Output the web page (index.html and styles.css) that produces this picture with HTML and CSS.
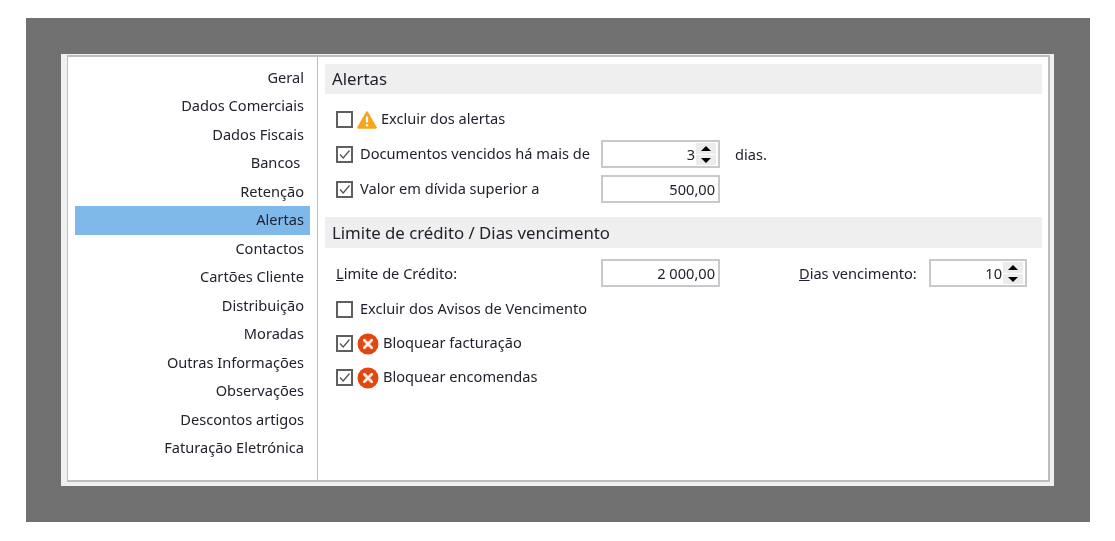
FILE: index.html
```html
<!DOCTYPE html>
<html lang="pt">
<head>
<meta charset="utf-8">
<title>Alertas</title>
<link rel="stylesheet" href="styles.css">
</head>
<body>
<div class="backdrop">
  <div class="frame">
    <div class="window">
      <nav class="sidebar">
        <div class="nav-item">Geral</div>
        <div class="nav-item">Dados Comerciais</div>
        <div class="nav-item">Dados Fiscais</div>
        <div class="nav-item">Bancos&nbsp;</div>
        <div class="nav-item">Retenção</div>
        <div class="nav-item active">Alertas</div>
        <div class="nav-item">Contactos</div>
        <div class="nav-item">Cartões Cliente</div>
        <div class="nav-item">Distribuição</div>
        <div class="nav-item">Moradas</div>
        <div class="nav-item">Outras Informações</div>
        <div class="nav-item">Observações</div>
        <div class="nav-item">Descontos artigos</div>
        <div class="nav-item">Faturação Eletrónica</div>
      </nav>
      <main class="content">
        <h2 class="section">Alertas</h2>
        <div class="row row-check first">
          <span class="check"></span>
          <svg class="icon-warn" viewBox="0 0 20 18" width="20" height="18"><path d="M10 1.5 18.6 16.5H1.4Z" fill="#f8a51c" stroke="#f8a51c" stroke-width="2.4" stroke-linejoin="round"/><path d="M10 5.5v6" stroke="#fff" stroke-width="2.2"/><circle cx="10" cy="14.3" r="1.3" fill="#fff"/></svg>
          <span class="label label-warn">Excluir dos alertas</span>
        </div>
        <div class="row row-input gap-12">
          <span class="check checked"><svg viewBox="0 0 13 13" width="13" height="13"><path d="M2 6.5 5.2 10 11.5 2.5" fill="none" stroke="#555" stroke-width="1.3"/></svg></span>
          <span class="label label-plain">Documentos vencidos há mais de</span>
          <span class="field field-a spin-field">
            <span class="value">3</span>
            <span class="spin"><span class="up"></span><span class="down"></span></span>
          </span>
          <span class="label unit">dias.</span>
        </div>
        <div class="row row-input gap-7">
          <span class="check checked"><svg viewBox="0 0 13 13" width="13" height="13"><path d="M2 6.5 5.2 10 11.5 2.5" fill="none" stroke="#555" stroke-width="1.3"/></svg></span>
          <span class="label label-plain">Valor em dívida superior a</span>
          <span class="field field-a"><span class="value">500,00</span></span>
        </div>
        <h2 class="section section-2">Limite de crédito / Dias vencimento</h2>
        <div class="row row-input gap-11">
          <span class="label label-limit"><u>L</u>imite de Crédito:</span>
          <span class="field field-a"><span class="value">2 000,00</span></span>
          <span class="label label-dias"><u>D</u>ias vencimento:</span>
          <span class="field field-b spin-field">
            <span class="value">10</span>
            <span class="spin"><span class="up"></span><span class="down"></span></span>
          </span>
        </div>
        <div class="row row-check gap-14">
          <span class="check"></span>
          <span class="label label-plain">Excluir dos Avisos de Vencimento</span>
        </div>
        <div class="row row-check gap-17">
          <span class="check checked"><svg viewBox="0 0 13 13" width="13" height="13"><path d="M2 6.5 5.2 10 11.5 2.5" fill="none" stroke="#555" stroke-width="1.3"/></svg></span>
          <svg class="icon-err" viewBox="0 0 22 22" width="22" height="22"><circle cx="11" cy="11" r="10.5" fill="#e2470f"/><path d="M7.3 7.3 14.7 14.7M14.7 7.3 7.3 14.7" stroke="#fdeee6" stroke-width="2.8" stroke-linecap="round"/></svg>
          <span class="label label-err">Bloquear facturação</span>
        </div>
        <div class="row row-check gap-17">
          <span class="check checked"><svg viewBox="0 0 13 13" width="13" height="13"><path d="M2 6.5 5.2 10 11.5 2.5" fill="none" stroke="#555" stroke-width="1.3"/></svg></span>
          <svg class="icon-err" viewBox="0 0 22 22" width="22" height="22"><circle cx="11" cy="11" r="10.5" fill="#e2470f"/><path d="M7.3 7.3 14.7 14.7M14.7 7.3 7.3 14.7" stroke="#fdeee6" stroke-width="2.8" stroke-linecap="round"/></svg>
          <span class="label label-err">Bloquear encomendas</span>
        </div>
      </main>
    </div>
  </div>
</div>
</body>
</html>
```
FILE: styles.css
```css
* { box-sizing: border-box; }
html, body { margin: 0; padding: 0; background: #fff; }
body {
  width: 1115px;
  height: 541px;
  overflow: hidden;
  font-family: "Noto Sans", "Open Sans", sans-serif;
  font-size: 14.6px;
  color: #22222e;
}
.backdrop {
  margin: 18px 0 0 26px;
  width: 1064px;
  height: 504px;
  padding: 36px 36px 36px 35px;
  background: #717171;
}
.frame {
  width: 993px;
  height: 432px;
  padding: 1px 4px 4px 6px;
  background: #f0f0f0;
}
.window {
  display: flex;
  height: 100%;
  border: 1px solid #bdbdbd;
  border-top-width: 2px;
  border-bottom-width: 2px;
  border-right-width: 2px;
  background: #fff;
  filter: blur(0.3px);
}
.sidebar {
  width: 250px;
  flex: none;
  padding: 6.5px 7px 0 7px;
  border-right: 1px solid #bdbdbd;
}
.nav-item {
  height: 28.5px;
  line-height: 27.5px;
  padding-right: 6px;
  text-align: right;
  white-space: nowrap;
}
.nav-item.active { background: #7fb9ea; }
.content {
  flex: 1;
  min-width: 0;
  padding: 7px 6px 0 7px;
}
.section {
  margin: 0;
  height: 30px;
  padding-left: 7px;
  background: #efefef;
  font-size: 16.8px;
  font-weight: 400;
  line-height: 30px;
}
.section-2 { height: 31px; margin-top: 14px; line-height: 31px; }
.row { display: flex; align-items: center; padding-left: 11px; white-space: nowrap; }
.row-check { height: 17px; }
.row-input { height: 28px; }
.first { margin-top: 17px; }
.gap-7 { margin-top: 7px; }
.gap-11 { margin-top: 11px; }
.gap-12 { margin-top: 12px; }
.gap-14 { margin-top: 14px; }
.gap-17 { margin-top: 17px; }
.check {
  display: flex;
  align-items: center;
  justify-content: center;
  flex: none;
  width: 17px;
  height: 17px;
  border: 2px solid #5f5f5f;
  background: #fff;
}
.icon-warn { flex: none; margin-left: 4px; }
.icon-err { flex: none; margin-left: 4px; }
.label { display: block; line-height: 17px; }
.label-warn { margin-left: 4px; position: relative; top: -1px; }
.label-err { margin-left: 4px; position: relative; top: -1px; }
.label-plain { margin-left: 7px; width: 241px; flex: none; position: relative; top: -1px; }
.label-limit { width: 265px; flex: none; }
.label-dias { margin-left: 79px; width: 130px; flex: none; }
.unit { margin-left: 15px; }
.field {
  display: flex;
  align-items: center;
  justify-content: flex-end;
  flex: none;
  height: 28px;
  border: 2px solid #c9c9c9;
  background: #fff;
  padding-right: 3px;
}
.field-a { width: 119px; }
.field-b { width: 98px; }
.spin-field { padding-right: 2px; }
.value { line-height: 24px; }
.spin {
  display: flex;
  flex-direction: column;
  gap: 1px;
  width: 20px;
  height: 22px;
  margin-left: 1px;
  background: #fff;
}
.up, .down {
  position: relative;
  flex: 1;
  background: #ececec;
}
.up::after, .down::after {
  content: "";
  position: absolute;
  left: 5px;
  top: 3px;
  border-left: 5px solid transparent;
  border-right: 5px solid transparent;
}
.up::after { border-bottom: 5px solid #000; }
.down::after { border-top: 5px solid #000; }
```
